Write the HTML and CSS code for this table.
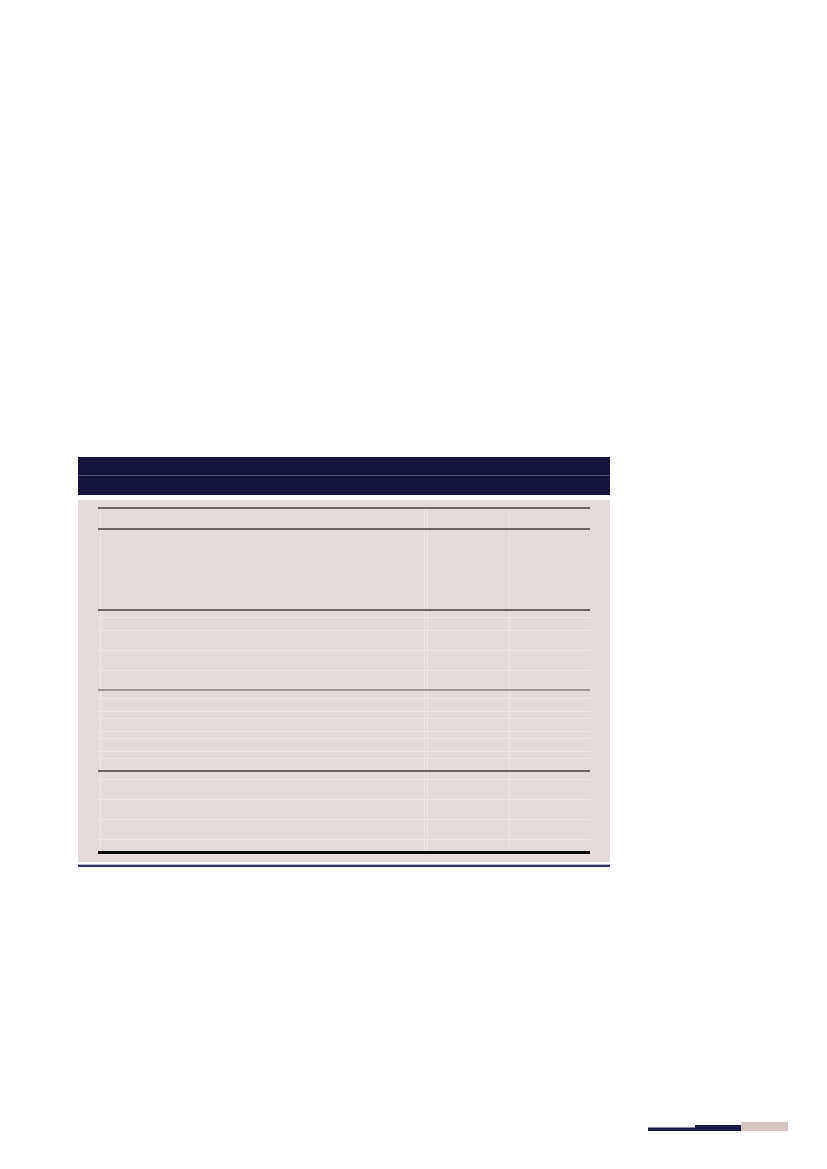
FILE: index.html
```html
<!DOCTYPE html>
<html lang="en">
<head>
<meta charset="utf-8">
<title>Table</title>
<link rel="stylesheet" href="styles.css">
</head>
<body>
<div class="page">
  <div class="block">
    <div class="head">
      <div class="head-row head-row--top"></div>
      <div class="head-row"></div>
    </div>
    <div class="panel">
      <div class="tbl">
        <div class="rule rule--dark"></div>
        <div class="row h19"><div class="c1"></div><div class="c2"></div><div class="c3"></div></div>
        <div class="rule rule--dark"></div>
        <div class="row h79"><div class="c1"></div><div class="c2"></div><div class="c3"></div></div>
        <div class="rule rule--dark"></div>
        <div class="row h6 sep"><div class="c1"></div><div class="c2"></div><div class="c3"></div></div>
        <div class="row h12 sep"><div class="c1"></div><div class="c2"></div><div class="c3"></div></div>
        <div class="row h19 sep"><div class="c1"></div><div class="c2"></div><div class="c3"></div></div>
        <div class="row h19 sep"><div class="c1"></div><div class="c2"></div><div class="c3"></div></div>
        <div class="row h18"><div class="c1"></div><div class="c2"></div><div class="c3"></div></div>
        <div class="rule rule--grey"></div>
        <div class="row h7 sep"><div class="c1"></div><div class="c2"></div><div class="c3"></div></div>
        <div class="row h12 sep"><div class="c1"></div><div class="c2"></div><div class="c3"></div></div>
        <div class="row h6 sep"><div class="c1"></div><div class="c2"></div><div class="c3"></div></div>
        <div class="row h12 sep"><div class="c1"></div><div class="c2"></div><div class="c3"></div></div>
        <div class="row h6 sep"><div class="c1"></div><div class="c2"></div><div class="c3"></div></div>
        <div class="row h12 sep"><div class="c1"></div><div class="c2"></div><div class="c3"></div></div>
        <div class="row h6 sep"><div class="c1"></div><div class="c2"></div><div class="c3"></div></div>
        <div class="row h11"><div class="c1"></div><div class="c2"></div><div class="c3"></div></div>
        <div class="rule rule--dark"></div>
        <div class="row h7 sep"><div class="c1"></div><div class="c2"></div><div class="c3"></div></div>
        <div class="row h19 sep"><div class="c1"></div><div class="c2"></div><div class="c3"></div></div>
        <div class="row h19 sep"><div class="c1"></div><div class="c2"></div><div class="c3"></div></div>
        <div class="row h19 sep"><div class="c1"></div><div class="c2"></div><div class="c3"></div></div>
        <div class="row h11"><div class="c1"></div><div class="c2"></div><div class="c3"></div></div>
        <div class="rule rule--black"></div>
      </div>
    </div>
    <div class="bottom-line"></div>
  </div>
  <div class="footer">
    <div class="bar bar--thin"></div>
    <div class="bar bar--mid"></div>
    <div class="bar bar--pink"></div>
  </div>
</div>
</body>
</html>
```

FILE: styles.css
```css
html, body {
  margin: 0;
  padding: 0;
  background: #ffffff;
  font-family: "Liberation Sans", Arial, sans-serif;
}

.page {
  width: 827px;
  height: 1169px;
  box-sizing: border-box;
  padding-top: 457px;
  display: flex;
  flex-direction: column;
}

.block {
  margin-left: 78px;
  width: 532px;
}

.head {
  background: #14143c;
  height: 38px;
}

.head-row {
  height: 19px;
  box-sizing: border-box;
}

.head-row--top {
  border-bottom: 1px solid #50506e;
}

.panel {
  margin-top: 5px;
  background: #e3dbda;
  height: 362px;
  box-sizing: border-box;
  padding: 7px 20px 0 20px;
}

.tbl {
  width: 492px;
}

.rule {
  height: 2px;
}

.rule--dark {
  background: #696463;
}

.rule--grey {
  background: #9c9594;
}

.rule--black {
  height: 3px;
  background: #000000;
}

.row {
  display: flex;
  box-sizing: border-box;
}

.row.sep {
  border-bottom: 1px solid #ede8e7;
}

.h6 { height: 7px; }
.h7 { height: 8px; }
.h11 { height: 11px; }
.h12 { height: 13px; }
.h18 { height: 18px; }
.h19 { height: 20px; }
.h79 { height: 79px; }
.row.h19:not(.sep) { height: 19px; }

.c1 {
  margin-left: 2px;
  width: 324px;
  border-left: 1px solid #ece6e5;
  box-sizing: border-box;
}

.c2 {
  width: 85px;
  border-left: 1px solid #ebe5e4;
  box-shadow: inset 2px 0 0 #e3dbda, inset 3px 0 0 #ebe5e4;
  box-sizing: border-box;
}

.c3 {
  width: 81px;
  border-left: 1px solid #ebe5e4;
  box-sizing: border-box;
}

.bottom-line {
  margin-top: 3px;
  height: 2px;
  background: #2e3264;
  box-shadow: 0 -1px 0 #b9bbd0;
}

.footer {
  margin-top: auto;
  margin-bottom: 38px;
  display: flex;
  justify-content: flex-end;
  align-items: flex-end;
  padding-right: 39px;
}

.bar {
  box-sizing: border-box;
}

.bar--thin {
  width: 47px;
  height: 4px;
  background: #1c1c3e;
  border-top: 1px solid #8e8ea6;
}

.bar--mid {
  width: 46px;
  height: 6px;
  background: #1c1c3e;
}

.bar--pink {
  width: 47px;
  height: 9px;
  background: #d4c4c2;
}
```
